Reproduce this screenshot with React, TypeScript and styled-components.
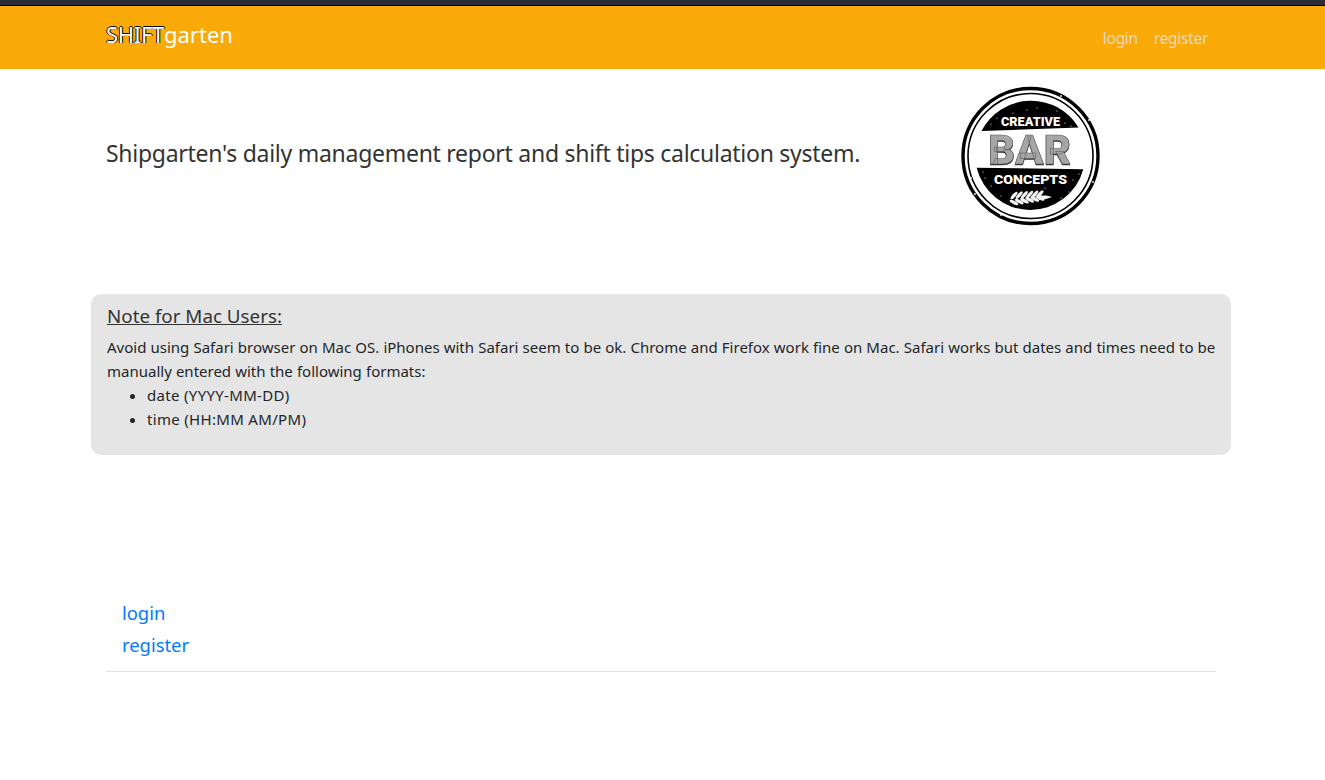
import React from "react";
import styled, { createGlobalStyle } from "styled-components";

const Global = createGlobalStyle`
  html, body { margin: 0; padding: 0; background: #fff; }
  body { font-family: "Noto Sans", "Open Sans", "Liberation Sans", sans-serif; color: #212529; font-size: 15px; line-height: 24px; }
`;
const TopStrip = styled.div`
  height: 5px; background: #2b2a33; border-bottom: 1px solid #000;
`;
const NavBar = styled.nav`
  height: 63px; background: #f9aa08;
`;
const Container = styled.div`
  width: 1140px; margin-left: 91px; box-sizing: border-box;
`;
const NavInner = styled(Container)`
  display: flex; justify-content: space-between; padding: 0 15px;
`;
const Brand = styled.a`
  font-size: 22px; line-height: 30px; margin-top: 13px; color: #fff;
`;
const Outlined = styled.span`
  color: #fff; text-shadow: -1px 0 0 #000, 1px 0 0 #0a0a0a, 0 -1px 0 #000; letter-spacing: -0.3px;
`;
const NavLinks = styled.div`
  display: flex; gap: 16px; margin-top: 20px; padding-right: 8px;
`;
const NavLink = styled.a`
  color: rgba(225, 225, 225, 0.85); font-size: 15.5px; line-height: 24px; letter-spacing: -0.3px;
`;
const Hero = styled(Container)`
  display: flex; height: 225px; padding: 17px 15px 0;
`;
const Lead = styled.h1`
  width: 855px; margin: 49px 0 0; font-size: 23px; line-height: 36px; font-weight: 400; color: #333; letter-spacing: -0.27px;
`;
const Note = styled(Container)`
  background: #e5e5e5; border-radius: 10px; height: 161px; padding: 8px 10px 8px 16px;
`;
const NoteTitle = styled.div`
  font-size: 18.8px; line-height: 28px; color: #333; text-decoration: underline; margin-bottom: 5px;
`;
const NoteText = styled.div`
  word-spacing: 0.22px;
`;
const NoteList = styled.ul`
  margin: 0; padding-left: 40px; letter-spacing: 0.32px;
`;
const Body = styled(Container)`
  padding: 142px 15px 0;
`;
const Links = styled.div`
  padding: 0 16px 10px; border-bottom: 1px solid #e2e2e2; width: 1078px;
`;
const BigLink = styled.a`
  display: block; color: #007bff; font-size: 18.4px; line-height: 32px;
`;
const LogoSvg = styled.svg`
  width: 140px; height: 140px; flex: none; display: block;
`;
const BarWord = styled.text`
  filter: drop-shadow(0.8px 1px 0 #333);
`;

const grains = [0, 1, 2, 3, 4, 5];
const specks: [number, number][] = [
  [36, 32], [30, 38], [66, 24], [52, 27], [96, 25], [104, 37], [110, 40], [76, 22],
  [24, 92], [30, 100], [112, 94], [108, 106], [40, 110], [100, 112], [84, 102], [56, 124], [22, 86], [118, 88],
];
const breaks: [number, number][] = [
  [14, 108], [10, 92], [128, 34], [132, 96], [22, 26], [118, 122], [40, 129], [100, 10], [8, 50],
];

const Logo = () => (
  <LogoSvg viewBox="0 0 140 140">
    <circle cx="69.5" cy="70" r="67.5" fill="none" stroke="#000" strokeWidth="3.4" />
    <circle cx="69.5" cy="70" r="62.5" fill="none" stroke="#000" strokeWidth="1.6" />
    <path d="M20.5 45 A55.5 55.5 0 0 1 117.5 41.5 Z" fill="#000" />
    <path d="M15.7 81.7 L122.3 83.3 A55 55 0 0 1 15.7 81.7 Z" fill="#000" />
    <g fill="#fff">
      {specks.map(([x, y]) => <circle key={`${x}-${y}`} cx={x} cy={y} r="0.6" />)}
      {breaks.map(([x, y]) => <circle key={`${x}-${y}`} cx={x} cy={y} r="0.9" />)}
    </g>
    <text x="40" y="40" textLength="59" lengthAdjust="spacingAndGlyphs" fontFamily="Roboto, sans-serif" fontWeight="900" fontSize="12.7" fill="#fff">CREATIVE</text>
    <BarWord x="27" y="77.5" textLength="83" lengthAdjust="spacingAndGlyphs" fontFamily="Roboto, sans-serif" fontWeight="900" fontSize="40" fill="#a6a6a6" stroke="#555" strokeWidth="0.5">BAR</BarWord>
    <text x="33" y="98" textLength="73" lengthAdjust="spacingAndGlyphs" fontFamily="Roboto, sans-serif" fontWeight="900" fontSize="12.7" fill="#fff">CONCEPTS</text>
    <g fill="#f2f2f2">
      {grains.map((i) => (
        <g key={i}>
          <ellipse cx={53 + i * 5.2} cy={109.5 - i * 0.3} rx="4.8" ry="1.7" transform={`rotate(-48 ${53 + i * 5.2} ${109.5 - i * 0.3})`} />
          <ellipse cx={53 + i * 5.2} cy={116.5 - i * 0.9} rx="4.8" ry="1.7" transform={`rotate(28 ${53 + i * 5.2} ${116.5 - i * 0.9})`} />
        </g>
      ))}
      <path d="M78 110 C84 109 88 110 91 111 C86 113 82 114 78 114 Z" />
    </g>
  </LogoSvg>
);

export default function App() {
  return (
    <>
      <Global />
      <TopStrip />
      <NavBar>
        <NavInner>
          <Brand><Outlined>SHIFT</Outlined>garten</Brand>
          <NavLinks>
            <NavLink>login</NavLink>
            <NavLink>register</NavLink>
          </NavLinks>
        </NavInner>
      </NavBar>
      <Hero>
        <Lead>Shipgarten's daily management report and shift tips calculation system.</Lead>
        <Logo />
      </Hero>
      <Note>
        <NoteTitle>Note for Mac Users:</NoteTitle>
        <NoteText>
          Avoid using Safari browser on Mac OS. iPhones with Safari seem to be ok. Chrome and Firefox work fine on Mac. Safari works but dates and times need to be manually entered with the following formats:
        </NoteText>
        <NoteList>
          <li>date (YYYY-MM-DD)</li>
          <li>time (HH:MM AM/PM)</li>
        </NoteList>
      </Note>
      <Body>
        <Links>
          <BigLink>login</BigLink>
          <BigLink>register</BigLink>
        </Links>
      </Body>
    </>
  );
}
